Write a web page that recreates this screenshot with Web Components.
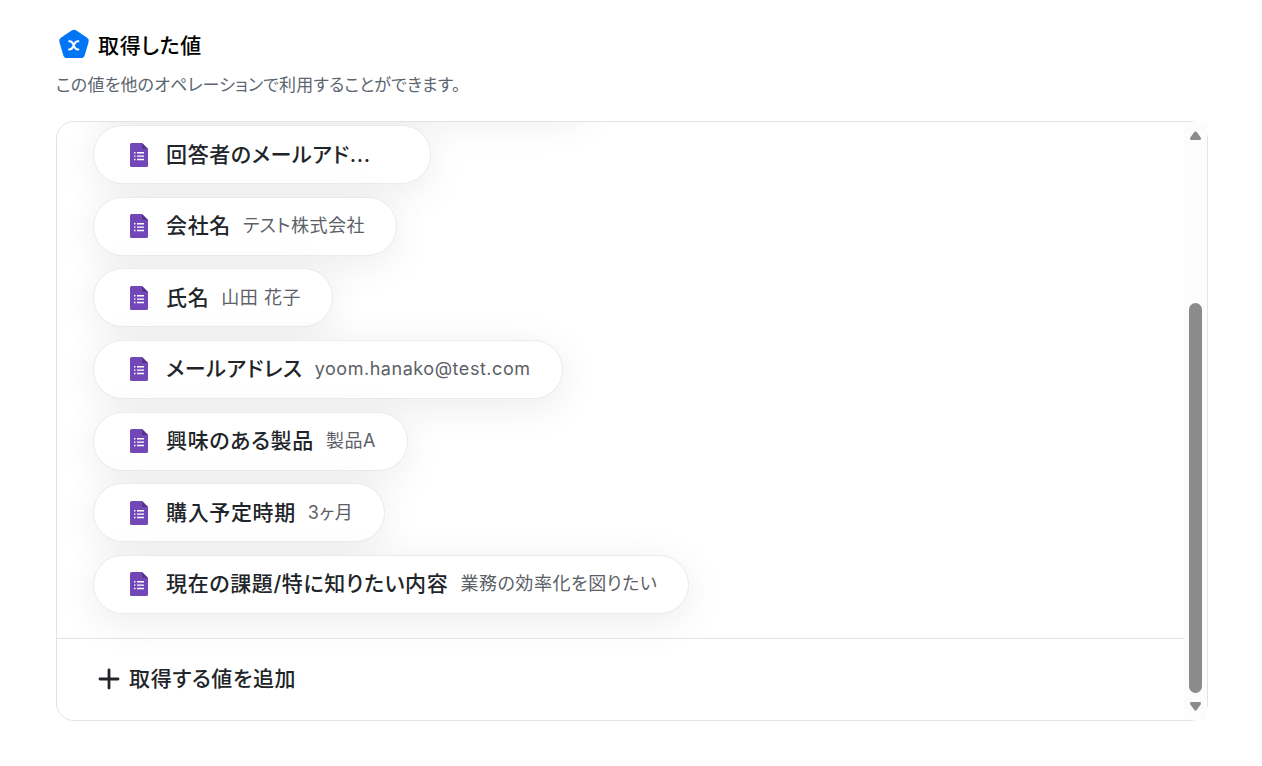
<!DOCTYPE html>
<html lang="ja">
<head>
<meta charset="utf-8">
<title>取得した値</title>
<style>
html, body { margin: 0; }
body {
  background: #fff;
  color: #212529;
  font-family: Inter, "Noto Sans CJK JP", sans-serif;
  font-feature-settings: "palt";
}
</style>
</head>
<body>
<values-page>
  <value-heading slot="heading">
    取得した値
    <span slot="note">この値を他のオペレーションで利用することができます。</span>
  </value-heading>
  <value-panel>
    <value-chip clipped>回答者のメールアド...</value-chip>
    <value-chip>会社名<span slot="value">テスト株式会社</span></value-chip>
    <value-chip>氏名<span slot="value">山田 花子</span></value-chip>
    <value-chip>メールアドレス<span slot="value">yoom.hanako@test.com</span></value-chip>
    <value-chip>興味のある製品<span slot="value">製品A</span></value-chip>
    <value-chip>購入予定時期<span slot="value">3ヶ月</span></value-chip>
    <value-chip>現在の課題/特に知りたい内容<span slot="value">業務の効率化を図りたい</span></value-chip>
    <add-value slot="footer">取得する値を追加</add-value>
  </value-panel>
</values-page>
<script>
const define = (name, html) => {
  const template = document.createElement('template');
  template.innerHTML = html;
  customElements.define(name, class extends HTMLElement {
    constructor() {
      super();
      this.attachShadow({ mode: 'open' }).append(template.content.cloneNode(true));
    }
  });
};

define('values-page', `
<style>
:host { display: flex; flex-direction: column; gap: 24px; box-sizing: border-box;
  min-height: 100vh; padding: 28px 54px 45px 56px; }
::slotted(value-panel) { flex: 1; }
</style>
<slot name="heading"></slot>
<slot></slot>`);

define('value-heading', `
<style>
:host { display: block; }
.title { display: flex; align-items: flex-start; gap: 8px; padding-left: 2px; }
svg { width: 32px; height: 32px; flex: none; }
h1 { margin: 0; padding-top: 3px; font-size: 21px; line-height: 30px; font-weight: 500; letter-spacing: 0.03em; color: #000; }
p { margin: 12px 0 0; font-size: 17px; line-height: 24px; letter-spacing: 0.01em; color: #5c6670; }
</style>
<div class="title">
  <svg viewBox="0 0 32 32" aria-hidden="true">
    <path d="M13.6 2.6Q16 1 18.4 2.6L29.1 9.8Q31.4 11.4 30.6 14L26.7 27.2Q26 30 23 30H9Q6 30 5.3 27.2L1.4 14Q.6 11.4 2.9 9.8Z" fill="#0076f6"/>
    <path d="M11.2 13.2C14.6 12.6 14.4 15.4 15.7 17.4C17 19.6 17 21.8 20.4 21.4M20.4 13.2C17 12.8 17 15.4 15.7 17.4C14.4 19.6 14.2 22 11 21.4" fill="none" stroke="#fff" stroke-width="2" stroke-linecap="round"/>
  </svg>
  <h1><slot></slot></h1>
</div>
<p><slot name="note"></slot></p>`);

define('value-panel', `
<style>
:host { display: flex; position: relative; border: 1px solid #e1e3e5; border-radius: 18px; }
.content { flex: 1; min-width: 0; display: flex; flex-direction: column; overflow: hidden; border-radius: 18px 0 0 18px; }
.list { position: relative; flex: 1; display: flex; flex-direction: column; justify-content: space-between;
  align-items: flex-start; padding: 3px 36px 24px; }
.list::before { content: ""; position: absolute; left: 36px; top: -68px; width: 500px; height: 59px;
  border-radius: 30px; box-shadow: 0 8px 40px rgba(0, 0, 0, .08); }
</style>
<div class="content">
  <div class="list"><slot></slot></div>
  <slot name="footer"></slot>
</div>
<scroll-rail></scroll-rail>`);

define('scroll-rail', `
<style>
:host { display: flex; flex-direction: column; align-items: center; box-sizing: border-box;
  width: 23px; padding: 9px 0; background: #fcfcfc; }
svg { width: 13px; height: 9px; fill: #8b8b8b; flex: none; }
.before { flex: 163; }
.thumb { flex: 390; width: 13px; border-radius: 7px; background: #8b8b8b; }
.after { flex: 9; }
</style>
<svg viewBox="0 0 13 9" aria-hidden="true"><path d="M5.3 1Q6.5 0 7.7 1L12 7Q12.4 9 10.8 9H2.2Q.6 9 1 7Z"/></svg>
<div class="before"></div>
<div class="thumb"></div>
<div class="after"></div>
<svg viewBox="0 0 13 9" aria-hidden="true"><path d="M5.3 8Q6.5 9 7.7 8L12 2Q12.4 0 10.8 0H2.2Q.6 0 1 2Z"/></svg>`);

define('value-chip', `
<style>
:host { position: relative; display: flex; align-items: center; box-sizing: border-box; height: 59px; padding: 0 31px 0 36px;
  border: 1px solid #e8ebef; border-radius: 30px; background: #fff; white-space: nowrap;
  box-shadow: 0 8px 40px rgba(0, 0, 0, .08); }
svg { width: 18px; height: 24px; margin-right: 18px; flex: none; }
.label { font-size: 21px; line-height: 30px; font-weight: 500; letter-spacing: 0.03em; margin-right: 12px; }
:host([clipped]) .label { width: 221px; }
.value { font-size: 18px; line-height: 30px; letter-spacing: 0.03em; color: #5c6067; }
</style>
<svg viewBox="0 0 18 24" aria-hidden="true">
  <path d="M1.6 0H12l6 6v16.4q0 1.6-1.6 1.6H1.6Q0 24 0 22.4V1.6Q0 0 1.6 0Z" fill="#7248b9"/>
  <path d="M12 0l6 6h-4.8Q12 6 12 4.8Z" fill="#54358c"/>
  <path d="M7 9h7v1.4H7zM7 12.4h7v1.4H7zM7 15.8h7v1.4H7zM4 9h1.5v1.4H4zM4 12.4h1.5v1.4H4zM4 15.8h1.5v1.4H4z" fill="#fff"/>
</svg>
<span class="label"><slot></slot></span>
<span class="value"><slot name="value"></slot></span>`);

define('add-value', `
<style>
:host { display: flex; position: relative; box-sizing: border-box; border-top: 1px solid #e1e3e5; height: 82px; padding: 0 0 2px 41px; }
button { display: flex; align-items: center; gap: 9px; padding: 0; border: 0; background: none; cursor: pointer;
  color: inherit; font: inherit; font-feature-settings: inherit; font-size: 21px; line-height: 30px; font-weight: 500; letter-spacing: 0.03em; }
svg { width: 22px; height: 22px; }
</style>
<button type="button">
  <svg viewBox="0 0 22 22" aria-hidden="true"><path d="M11 2v18M2 11h18" stroke="#212529" stroke-width="2.8" stroke-linecap="round"/></svg>
  <slot></slot>
</button>`);
</script>
</body>
</html>
